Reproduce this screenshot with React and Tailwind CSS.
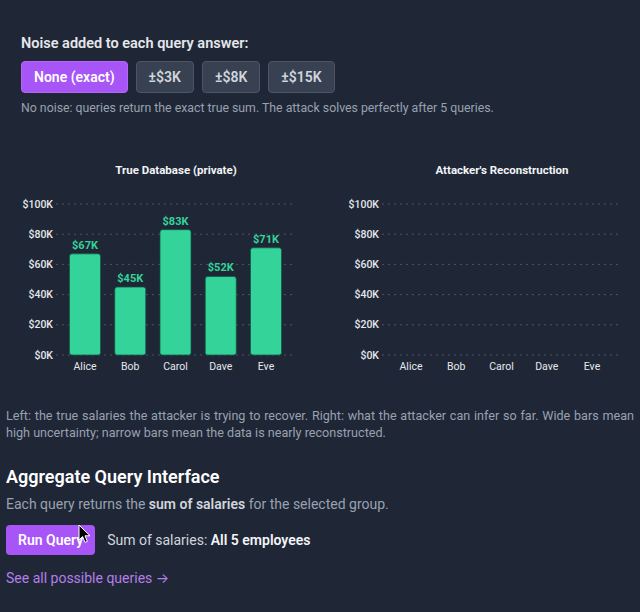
import React from 'react';

const employees = [
  { name: 'Alice', salary: 67 },
  { name: 'Bob', salary: 45 },
  { name: 'Carol', salary: 83 },
  { name: 'Dave', salary: 52 },
  { name: 'Eve', salary: 71 },
];

const noiseLevels = ['None (exact)', '±$3K', '±$8K', '±$15K'];

const FONT = 'Roboto, Inter, "Noto Sans", sans-serif';

// chart geometry (svg units)
const PLOT_LEFT = 50;
const PLOT_RIGHT = 290;
const Y_TOP = 44;
const Y_ZERO = 195;
const ticks = [100, 80, 60, 40, 20, 0];
const yFor = (v) => Y_ZERO - ((Y_ZERO - Y_TOP) * v) / 100;
const xFor = (i) => 79 + i * 45.25;

const SalaryChart = ({ title, showBars }) => (
  <svg width="302" height="220" className="block" style={{ fontFamily: FONT }}>
    <text x="170" y="14" textAnchor="middle" fill="#f3f4f6" fontSize="11.5" fontWeight="700">
      {title}
    </text>
    {ticks.map((t) => (
      <g key={t}>
        <line
          x1={PLOT_LEFT}
          x2={PLOT_RIGHT}
          y1={yFor(t)}
          y2={yFor(t)}
          stroke="#4b5563"
          strokeWidth="1"
          strokeDasharray="2 4"
        />
        <text x="47" y={yFor(t) + 3.5} textAnchor="end" fill="#e5e7eb" fontSize="10.5" fontWeight="500">
          ${t}K
        </text>
      </g>
    ))}
    {showBars &&
      employees.map((e, i) => (
        <g key={e.name}>
          <rect
            x={xFor(i) - 15.5}
            y={yFor(e.salary)}
            width="31"
            height={Y_ZERO - yFor(e.salary)}
            rx="2.5"
            fill="#34d399"
            stroke="#0f5a44"
            strokeWidth="0.75"
          />
          <text
            x={xFor(i)}
            y={yFor(e.salary) - 5}
            textAnchor="middle"
            fill="#34d399"
            fontSize="11"
            fontWeight="700"
          >
            ${e.salary}K
          </text>
        </g>
      ))}
    {employees.map((e, i) => (
      <text key={e.name} x={xFor(i)} y="210" textAnchor="middle" fill="#e5e7eb" fontSize="10.5">
        {e.name}
      </text>
    ))}
  </svg>
);

const Cursor = () => (
  <svg width="13" height="20" viewBox="0 0 13 20" className="absolute left-[72px] top-[-1px] pointer-events-none">
    <path d="M1 1 L1 16 L4.6 12.6 L7 18.4 L9.4 17.4 L7 11.8 L12 11.8 Z" fill="#000" stroke="#fff" strokeWidth="1" strokeLinejoin="round" />
  </svg>
);

export default function App() {
  return (
    <div className="min-h-screen bg-[#1f2737] px-[6px] pt-[34px] text-gray-200" style={{ fontFamily: FONT }}>
      {/* noise selector */}
      <div className="px-[15px]">
        <h4 className="text-[14.5px] font-semibold leading-5 text-gray-200">Noise added to each query answer:</h4>
        <div className="mt-[7px] flex gap-2">
          {noiseLevels.map((label, i) => (
            <button
              key={label}
              className={
                i === 0
                  ? 'h-8 rounded-[4px] border border-[#b565f7] bg-[#a855f7] px-3 text-[14px] font-semibold text-white'
                  : 'h-8 rounded-[4px] border border-[#4b5563] bg-[#374151] px-3 text-[14px] font-semibold text-gray-300'
              }
            >
              {label}
            </button>
          ))}
        </div>
        <p className="mt-[7px] text-[12.3px] leading-4 text-gray-400">
          No noise: queries return the exact true sum. The attack solves perfectly after 5 queries.
        </p>
      </div>

      {/* charts */}
      <div className="mt-[44px] grid grid-cols-[302px_302px] gap-6">
        <SalaryChart title="True Database (private)" showBars />
        <SalaryChart title="Attacker's Reconstruction" showBars={false} />
      </div>

      <p className="mt-[27px] text-justify text-[12.6px] leading-[17px] text-gray-400">
        Left: the true salaries the attacker is trying to recover. Right: what the attacker can infer so far. Wide bars mean high
        uncertainty; narrow bars mean the data is nearly reconstructed.
      </p>

      {/* query interface */}
      <h3 className="mt-[24px] text-[18px] font-semibold leading-6 text-white">Aggregate Query Interface</h3>
      <p className="mt-[5px] text-[14px] leading-5 text-gray-400">
        Each query returns the <span className="font-semibold text-gray-300">sum of salaries</span> for the selected group.
      </p>
      <div className="mt-[11px] flex items-center gap-3">
        <div className="relative">
          <button className="h-[30px] rounded-[4px] bg-[#a855f7] px-3 text-[14px] font-semibold text-white">Run Query</button>
          <Cursor />
        </div>
        <span className="text-[14px] text-gray-300">
          Sum of salaries: <span className="font-semibold text-gray-100">All 5 employees</span>
        </span>
      </div>
      <a className="mt-[13px] inline-block text-[14px] text-[#b57ee8]">See all possible queries →</a>
    </div>
  );
}
